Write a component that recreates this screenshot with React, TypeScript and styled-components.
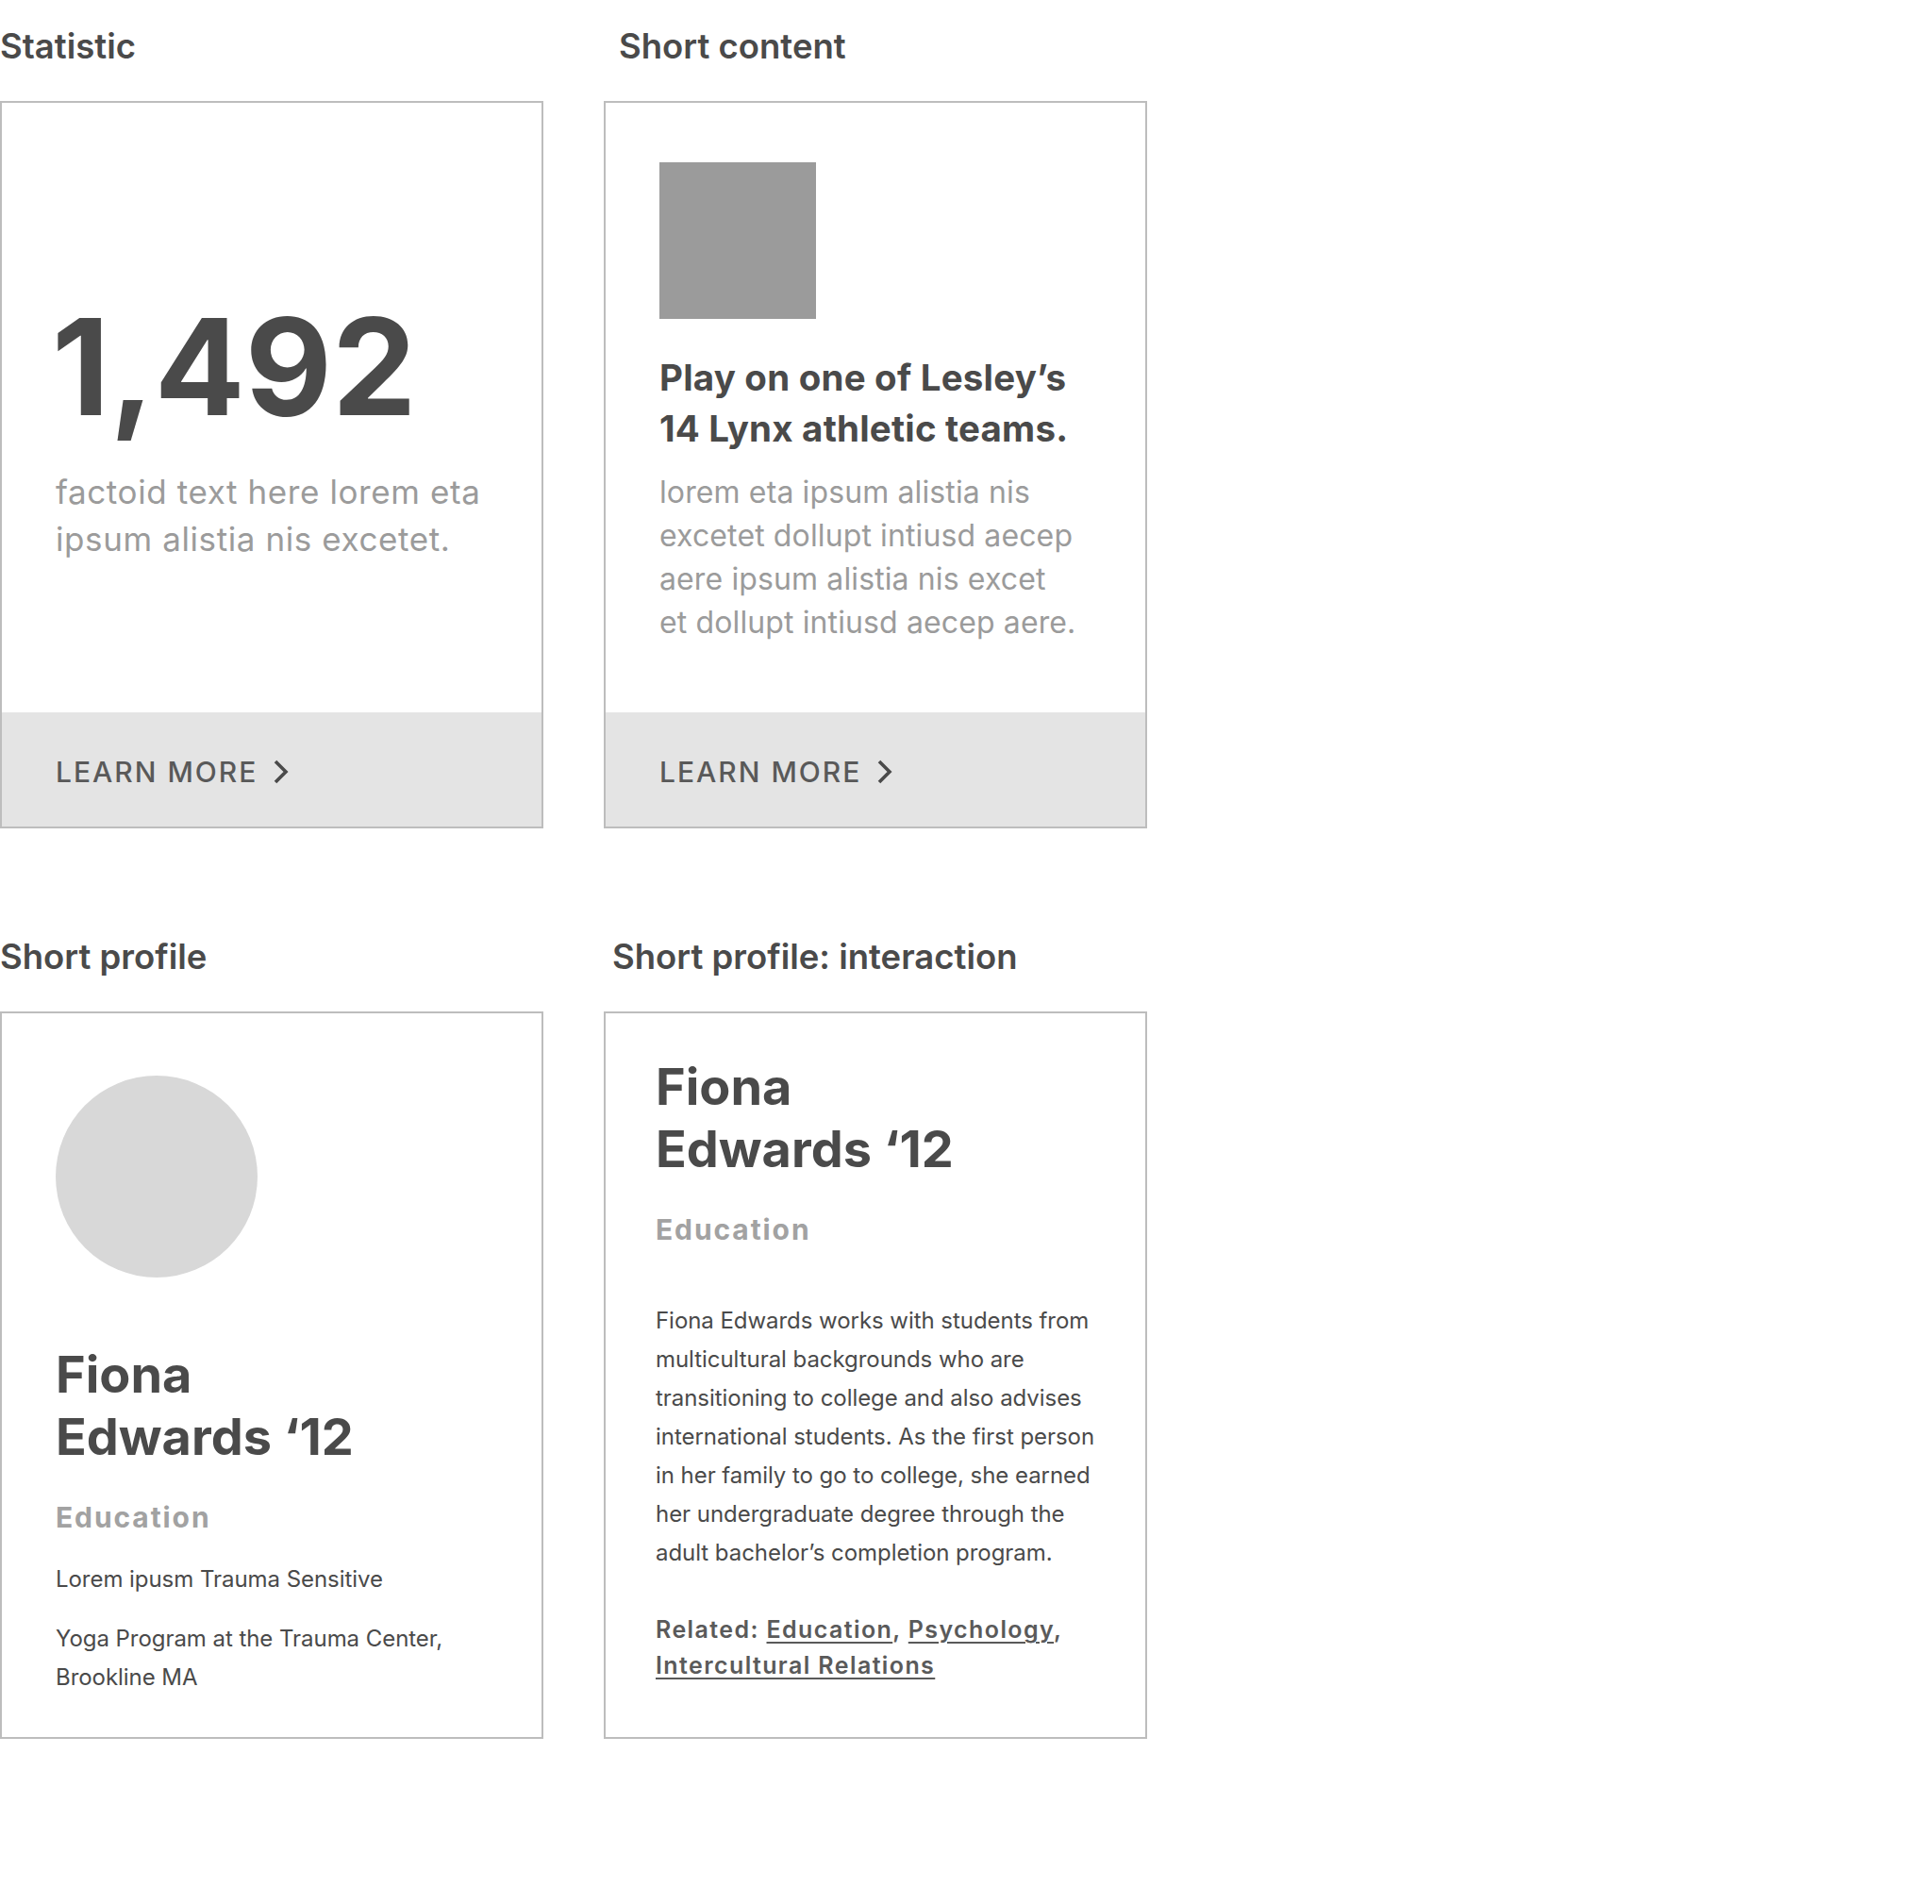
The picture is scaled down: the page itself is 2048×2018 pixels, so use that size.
import React from "react";
import styled, { createGlobalStyle } from "styled-components";

const GlobalStyle = createGlobalStyle`
  html, body {
    margin: 0;
    padding: 0;
    background: #ffffff;
  }
  body {
    font-family: Inter, "Noto Sans", "Liberation Sans", sans-serif;
    color: #4a4a4a;
    -webkit-font-smoothing: antialiased;
  }
  * { box-sizing: border-box; }
`;

const Page = styled.div`
  display: grid;
  grid-template-columns: 576px 576px;
  column-gap: 64px;
  row-gap: 116px;
  padding-top: 29px;
  width: 2048px;
  min-height: 2018px;
  align-content: start;
`;

const Section = styled.section`
  display: flex;
  flex-direction: column;
  gap: 37px;
`;

const Heading = styled.h2<{ $indent?: number }>`
  margin: 0;
  padding-left: ${(p) => p.$indent ?? 0}px;
  font-size: 36.5px;
  line-height: 41px;
  font-weight: 600;
  color: #4a4a4a;
  letter-spacing: 0px;
  white-space: nowrap;
`;

const Card = styled.div`
  height: 771px;
  border: 2px solid #bdbdbd;
  display: flex;
  flex-direction: column;
  background: #fff;
`;

const Body = styled.div<{ $top: number; $side?: number }>`
  flex: 1;
  display: flex;
  flex-direction: column;
  align-items: flex-start;
  padding: ${(p) => p.$top}px ${(p) => p.$side ?? 57}px 0;
`;

const BigNumber = styled.div`
  font-size: 142px;
  line-height: 142px;
  font-weight: 700;
  letter-spacing: 0px;
  color: #4a4a4a;
  margin-left: -4px;
`;

const Factoid = styled.p`
  margin: 37px 0 0;
  font-size: 35px;
  line-height: 50px;
  color: #9b9b9b;
  letter-spacing: 0.6px;
  white-space: nowrap;
`;

const Footer = styled.a`
  height: 121px;
  background: #e4e4e4;
  display: flex;
  align-items: center;
  gap: 16px;
  padding: 5px 57px 0;
  text-decoration: none;
  color: #595959;
  font-size: 30px;
  font-weight: 500;
  letter-spacing: 2px;
`;

const Chevron = styled.svg`
  width: 18px;
  height: 26px;
  flex: none;
`;

const Thumb = styled.div`
  width: 166px;
  height: 166px;
  background: #9b9b9b;
  flex: none;
`;

const Title = styled.h3`
  margin: 35px 0 0;
  font-size: 38.5px;
  line-height: 54px;
  font-weight: 700;
  color: #4a4a4a;
  letter-spacing: 0.2px;
  white-space: nowrap;
`;

const Blurb = styled.p`
  margin: 18px 0 0;
  font-size: 32px;
  line-height: 46px;
  color: #9b9b9b;
  letter-spacing: 0.12px;
  white-space: nowrap;
`;

const Avatar = styled.div`
  width: 214px;
  height: 214px;
  border-radius: 50%;
  background: #d8d8d8;
  flex: none;
`;

const Name = styled.h3<{ $gap: number }>`
  margin: ${(p) => p.$gap}px 0 0;
  font-size: 54px;
  line-height: 66px;
  font-weight: 700;
  color: #4a4a4a;
  white-space: nowrap;
`;

const Dept = styled.div`
  margin-top: 34px;
  font-size: 30px;
  line-height: 36px;
  font-weight: 700;
  color: #a2a2a2;
  letter-spacing: 1.9px;
`;

const Detail = styled.p<{ $gap: number }>`
  margin: ${(p) => p.$gap}px 0 0;
  font-size: 24px;
  line-height: 41px;
  color: #4a4a4a;
  letter-spacing: -0.05px;
  white-space: nowrap;
`;

const Related = styled.p`
  margin: 42px 0 0;
  font-size: 25px;
  line-height: 38px;
  font-weight: 600;
  color: #5a5a5a;
  letter-spacing: 1.4px;
  white-space: nowrap;
`;

const TopicLink = styled.a`
  color: #5a5a5a;
  text-decoration: underline;
  text-decoration-thickness: 2px;
  text-underline-offset: 4px;
`;

const LearnMore = () => (
  <Footer href="#">
    LEARN MORE
    <Chevron viewBox="0 0 18 26" aria-hidden="true">
      <polyline
        points="3,2 14,13 3,24"
        fill="none"
        stroke="#4a4a4a"
        strokeWidth="3.6"
        strokeLinecap="butt"
        strokeLinejoin="miter"
      />
    </Chevron>
  </Footer>
);

export default function App() {
  return (
    <>
      <GlobalStyle />
      <Page>
        <Section>
          <Heading>Statistic</Heading>
          <Card>
            <Body $top={208}>
              <BigNumber>1,492</BigNumber>
              <Factoid>
                factoid text here lorem eta
                <br />
                ipsum alistia nis excetet.
              </Factoid>
            </Body>
            <LearnMore />
          </Card>
        </Section>

        <Section>
          <Heading $indent={16}>Short content</Heading>
          <Card>
            <Body $top={63}>
              <Thumb />
              <Title>
                Play on one of Lesley’s
                <br />
                14 Lynx athletic teams.
              </Title>
              <Blurb>
                lorem eta ipsum alistia nis
                <br />
                excetet dollupt intiusd aecep
                <br />
                aere ipsum alistia nis excet
                <br />
                et dollupt intiusd aecep aere.
              </Blurb>
            </Body>
            <LearnMore />
          </Card>
        </Section>

        <Section>
          <Heading>Short profile</Heading>
          <Card>
            <Body $top={66}>
              <Avatar />
              <Name $gap={70}>
                Fiona
                <br />
                Edwards ‘12
              </Name>
              <Dept>Education</Dept>
              <Detail $gap={27}>Lorem ipusm Trauma Sensitive</Detail>
              <Detail $gap={22}>
                Yoga Program at the Trauma Center,
                <br />
                Brookline MA
              </Detail>
            </Body>
          </Card>
        </Section>

        <Section>
          <Heading $indent={9}>Short profile: interaction</Heading>
          <Card>
            <Body $top={45} $side={53}>
              <Name $gap={0}>
                Fiona
                <br />
                Edwards ‘12
              </Name>
              <Dept>Education</Dept>
              <Detail $gap={58}>
                Fiona Edwards works with students from
                <br />
                multicultural backgrounds who are
                <br />
                transitioning to college and also advises
                <br />
                international students. As the first person
                <br />
                in her family to go to college, she earned
                <br />
                her undergraduate degree through the
                <br />
                adult bachelor’s completion program.
              </Detail>
              <Related>
                Related: <TopicLink href="#">Education</TopicLink>,{" "}
                <TopicLink href="#">Psychology</TopicLink>,
                <br />
                <TopicLink href="#">Intercultural Relations</TopicLink>
              </Related>
            </Body>
          </Card>
        </Section>
      </Page>
    </>
  );
}
